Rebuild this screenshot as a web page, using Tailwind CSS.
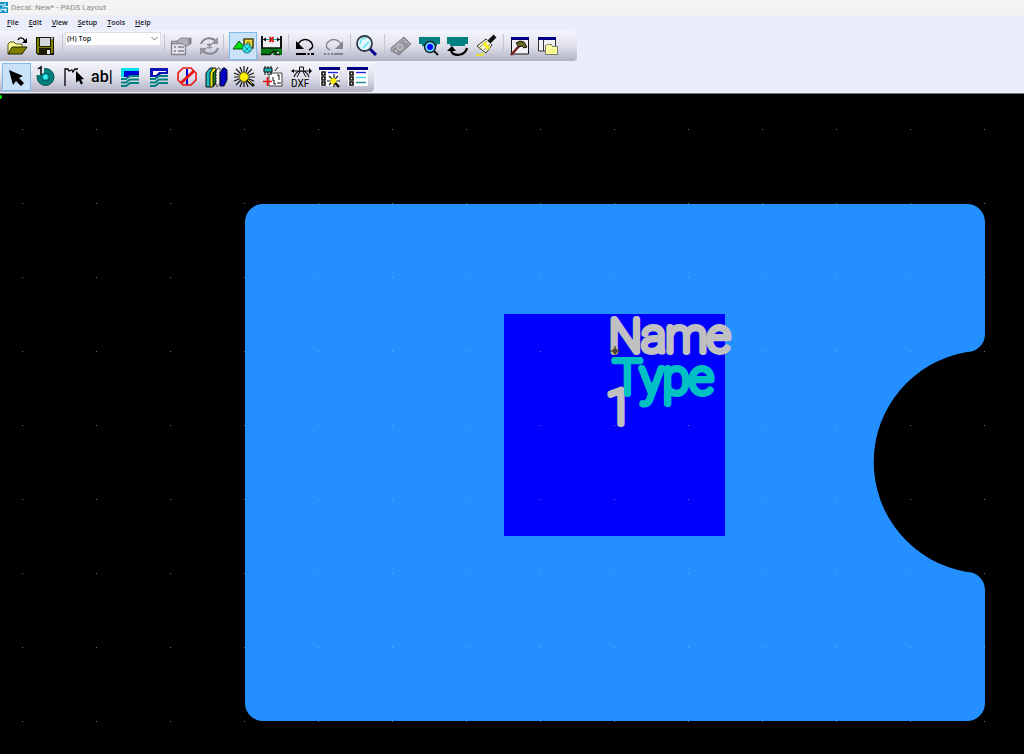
<!DOCTYPE html>
<html lang="en">
<head>
<meta charset="utf-8">
<title>Decal: New* - PADS Layout</title>
<script src="https://cdn.jsdelivr.net/npm/@tailwindcss/browser@4"></script>
</head>
<body class="flex h-screen flex-col overflow-hidden bg-[#ebedfb] font-['Open_Sans','Noto_Sans',sans-serif] text-black">

<header class="flex h-[15px] shrink-0 items-center gap-[3px] bg-[#f3f3f3] font-[Roboto,sans-serif] text-[8px] leading-3 text-[#8c8c8c]">
  <svg class="h-[11px] w-2 shrink-0" viewBox="0 0 8 12" preserveAspectRatio="none" aria-hidden="true"><path fill="#118fc4" d="M0 0h8v12H0z"/><path d="M0 3h3v3M5 1v4h3M1 11V8h4v3M6 7v3" fill="none" stroke="#d8f5ff" stroke-width="1.2"/></svg>
  <h1>Decal: New* - PADS Layout</h1>
</header>

<nav class="flex h-4 shrink-0 items-center gap-[10px] pl-[7px] text-[7px] leading-4 font-semibold text-[#15151c]" aria-label="Main menu">
  <button><u>F</u>ile</button>
  <button><u>E</u>dit</button>
  <button><u>V</u>iew</button>
  <button><u>S</u>etup</button>
  <button><u>T</u>ools</button>
  <button><u>H</u>elp</button>
</nav>

<div class="flex h-[30px] w-[577px] shrink-0 items-center rounded-r-sm bg-linear-to-b from-[#f5f6fc] via-[#dfe0ea] to-[#b2b2c6] pl-[3px]" role="toolbar" aria-label="Standard">
  <div class="flex w-14">
    <button class="flex-1" aria-label="Open"><svg class="size-7" viewBox="0 0 28 28"><path d="M5 22V12l2-2h4l2 2h6v3" fill="#ffff99" stroke="#55551a"/><path d="M5 22l4-7h15l-5 7z" fill="#808000" stroke="#222200"/><path d="M15 8c1-3 5-3 7 1" fill="none" stroke="#000" stroke-width="1.4"/><path d="M24 6v5h-5z"/></svg></button>
    <button class="flex-1" aria-label="Save"><svg class="size-7" viewBox="0 0 28 28"><path d="M5 5h18v18H7l-2-2z" fill="#1b1b08"/><path d="M6 6h2v15H6zM20 8h2v13h-2zM8 15h12v1H8z" fill="#808000"/><path d="M9 6h10v8H9z" fill="#d5d5de"/><path d="M16 18h3v4h-3z" fill="#e8e8ee"/><path d="M20 5.500h2v2h-2z" fill="#ddd"/></svg></button>
  </div>
  <span class="ml-[3px] h-6 w-px bg-[#c5c6d2]"></span>
  <div class="relative ml-[2px] flex h-7 w-24 items-start">
    <select aria-label="Layer" class="h-[14px] w-full appearance-none border border-[#dcdde6] bg-white py-0 pr-3 pl-px text-[7px] leading-3 font-semibold text-[#222]"><option>(H) Top</option></select>
    <svg class="pointer-events-none absolute top-[4px] right-[3px] h-[5px] w-[7px]" viewBox="0 0 7 5"><path d="M.5 1l3 3 3-3" fill="none" stroke="#777"/></svg>
  </div>
  <span class="ml-[3px] h-6 w-px bg-[#c5c6d2]"></span>
  <div class="ml-px flex w-[57px]">
    <button class="flex-1" aria-label="Properties"><svg class="size-7" viewBox="0 0 28 28" fill="none" stroke="#85858f"><path d="M5.500 9.500h14v13h-14z" fill="#e3e3ea" stroke-width="1.300"/><path d="M5 11.500h14M8 15h2M8 19h2M12 15h6M12 19h6" stroke-width="1.600"/><path d="M11 9l4-3h7l1 2v5l-4 1-3-3-3 1z" fill="#b2b2bb"/><path d="M23 6h2v6h-2" fill="#85858f"/></svg></button>
    <button class="flex-1" aria-label="Cycle"><svg class="size-7" viewBox="0 0 28 28" fill="none" stroke="#85858f" stroke-width="2"><path d="M6 12c2-6 10-8 15-3M23 16c-2 6-10 8-15 3"/><path d="M23 5v7h-7zM5 23v-7h7z" fill="#92929b" stroke="none"/><path d="M14.500 11v6M12 12l5 4M17 12l-5 4" stroke-width="1.200"/></svg></button>
  </div>
  <span class="h-6 w-px bg-[#c5c6d2]"></span>
  <div class="ml-[5px] flex w-14">
    <button class="flex-1 bg-[#c9e2f7] outline outline-[#80bbe9] -outline-offset-1" aria-label="Drafting toolbar" aria-pressed="true"><svg class="size-7" viewBox="0 0 28 28"><path d="M15 7h9v9h-9z" fill="#f2df3b" stroke="#4c4610" stroke-width="1.600"/><path d="M18 10h3v3h-3z" fill="#d8c52d" stroke="#8b8020"/><path d="M4 17l6-8 7 8z" fill="#00e000" stroke="#134d13"/><circle cx="18" cy="16.500" r="4.500" fill="#31e4ee" stroke="#177885"/><path d="M15 14l6 6M21 14l-6 6" stroke="#177885" stroke-width=".8"/></svg></button>
    <button class="flex-1" aria-label="Route design"><svg class="size-7" viewBox="0 0 28 28"><path d="M5 6h19v9H5z" fill="#f0f0f4"/><path d="M4 4h2v12H4zM23 4h2v12h-2z" fill="#111"/><path d="M6 7.500h17" stroke="#1f9c9c"/><path d="M6 7.500l3-2v4zM23 7.500l-3-2v4z"/><path d="M12.500 5l4 5M16.500 5l-4 5" stroke="#dd1010" stroke-width="2"/><path d="M4 16h21v7h-3v-3h-3v3h-3v-3l-3 3H4z" fill="#087a13"/><path d="M4 16h21M4 22.500h9l3-3h3v3h4" fill="none" stroke="#071d0b" stroke-width="1.500"/></svg></button>
  </div>
  <span class="ml-[3px] h-6 w-px bg-[#c5c6d2]"></span>
  <div class="ml-px flex w-[57px]">
    <button class="flex-1" aria-label="Undo"><svg class="size-7" viewBox="0 0 28 28"><path d="M8 12c3-5 9-6 13-2 3 4 2 6-2 8" fill="none" stroke="#000" stroke-width="1.500"/><path d="M6 9v8h8z"/><path d="M6 22h10M17.500 22h2M21 22h3" stroke="#000" stroke-width="2"/></svg></button>
    <button class="flex-1" aria-label="Redo"><svg class="size-7" viewBox="0 0 28 28"><path d="M22 12c-3-5-9-6-13-2-3 4-2 6 2 8" fill="none" stroke="#85858f" stroke-width="1.400"/><path d="M24 9v8h-8z" fill="#85858f"/><path d="M5 22h2M8.500 22h2M12 22h2M15 22h9" stroke="#85858f" stroke-width="2"/></svg></button>
  </div>
  <span class="ml-[3px] h-6 w-px bg-[#c5c6d2]"></span>
  <button class="ml-px" aria-label="Zoom"><svg class="size-7" viewBox="0 0 28 28"><path d="M18 17l6 6" stroke="#00008b" stroke-width="3"/><circle cx="12.500" cy="11.500" r="7.500" fill="#dff7fb" stroke="#303848" stroke-width="1.800"/><path d="M8 12c0-4 3-6 6-6M11 16l6-6" fill="none" stroke="#55e5ee" stroke-width="1.500"/></svg></button>
  <span class="ml-[4px] h-6 w-px bg-[#c5c6d2]"></span>
  <div class="ml-[2px] flex w-[114px]">
    <button class="flex-1" aria-label="Board"><svg class="size-7" viewBox="0 0 28 28" fill="#92929b" stroke="#85858f"><path d="M4 16L17 5l7 7-12 11-8-4z"/><path d="M4 18l13-11 6 6" fill="none" stroke="#b9b9c1"/><circle cx="13" cy="15" r="3" fill="#a2a2aa" stroke="#c9c9d0"/><path d="M17 9l2 2M8 18l2 2" stroke="#ddd"/></svg></button>
    <button class="flex-1" aria-label="View board"><svg class="size-7" viewBox="0 0 28 28"><path d="M3 5h21v7h-3v2H6v-2H3z" fill="#008080"/><path d="M18 19l4 4" stroke="#111" stroke-width="2"/><circle cx="14" cy="15" r="5.500" fill="#69dfef" stroke="#111a30" stroke-width="1.400"/><circle cx="14" cy="15" r="3" fill="#0000ff"/></svg></button>
    <button class="flex-1" aria-label="Refresh"><svg class="size-7" viewBox="0 0 28 28"><path d="M3 5h21v7h-3v2H6v-2H3z" fill="#008080"/><path d="M7 19c3 6 14 5 16-3" fill="none" stroke="#000" stroke-width="2.200"/><path d="M3 19l5-5 4 5z"/></svg></button>
    <button class="flex-1" aria-label="Clean up"><svg class="size-7" viewBox="0 0 28 28"><path d="M16 10l6-6" stroke="#111" stroke-width="4"/><path d="M4 14l9-7 6 6-6 8z" fill="#f6f6d1" stroke="#38382c"/><path d="M7 15l8-7M11 18l7-7" stroke="#888877"/><path d="M10 12l5 6 2-2-5-6z" fill="#fff20e"/><path d="M3 23h6l2-2" stroke="#eee600" fill="none" stroke-width="1.500"/></svg></button>
  </div>
  <span class="ml-[2px] h-6 w-px bg-[#c5c6d2]"></span>
  <div class="ml-px flex w-[57px]">
    <button class="flex-1" aria-label="Decal tools"><svg class="size-7" viewBox="0 0 28 28"><path d="M6.500 6h17v16h-17z" fill="#f2f2f6" stroke="#111"/><path d="M6 5h18v3H6z" fill="#000080"/><path d="M15 13L6 23" stroke="#782020" stroke-width="2.600"/><path d="M11 11l4-2 4 1 3 5-3 1-2-2-3 1z" fill="#66661a" stroke="#111"/></svg></button>
    <button class="flex-1" aria-label="Project explorer"><svg class="size-7" viewBox="0 0 28 28"><path d="M4.500 6h17v13h-17z" fill="#f2f2f6" stroke="#333"/><path d="M4 5h18v3H4z" fill="#000080"/><path d="M9.500 8v11" stroke="#333"/><path d="M11.500 22.500v-9l2-1h4l1 2h5v8z" fill="#ffffa6" stroke="#77776c"/><path d="M14 18h7M14 20h7" stroke="#e7d943" stroke-dasharray="1 1"/></svg></button>
  </div>
</div>

<div class="mt-px flex h-[30px] w-[374px] shrink-0 items-center rounded-r-sm bg-linear-to-b from-[#f5f6fc] via-[#dfe0ea] to-[#b2b2c6] pl-[2px]" role="toolbar" aria-label="Drafting">
  <div class="flex w-[371px]">
    <button class="flex-1 bg-[#c9e2f7] outline outline-[#80bbe9] -outline-offset-1" aria-label="Select" aria-pressed="true"><svg class="size-7" viewBox="0 0 28 28"><path d="M7 7l14 6-4 2 5 5-3 3-5-5-3 4z"/></svg></button>
    <button class="flex-1" aria-label="Terminal"><svg class="size-7" viewBox="0 0 28 28"><circle cx="14.500" cy="14" r="8.500" fill="#008080" stroke="#0c4c4c"/><path d="M4 3h9v9H4z" fill="#e6e7f0"/><circle cx="14.500" cy="14" r="4" fill="#00a8aa" stroke="#004e50"/><circle cx="14.500" cy="14" r="2.200" fill="#3ff0f3"/><path d="M7 6l3-2v8" fill="none" stroke="#000" stroke-width="1.500"/></svg></button>
    <button class="flex-1" aria-label="2D line"><svg class="size-7" viewBox="0 0 28 28"><path d="M6 23V6h3l1 2 3-1 1 2 2-3h3" fill="none" stroke="#000" stroke-width="1.300"/><path d="M17 8l8 8-3 .5 2 4-2 1-2-4-3 2z"/></svg></button>
    <button class="flex flex-1 items-center justify-center font-[Roboto,sans-serif] text-[16px] leading-4 font-medium" aria-label="Text">ab|</button>
    <button class="flex-1" aria-label="Copper"><svg class="size-7" viewBox="0 0 28 28"><path d="M5 5h18v6h-7l-3 3H5z" fill="#00dfee"/><path d="M8 8h15v4h-8l-3 2H8z" fill="#0000dc"/><path d="M5 16h5l4-3h9M5 19.500h5l4-3h9M5 23h5l4-3h9" fill="none" stroke="#008080" stroke-width="2"/></svg></button>
    <button class="flex-1" aria-label="Copper cutout"><svg class="size-7" viewBox="0 0 28 28"><path d="M5 5h18v6h-7l-3 3H5z" fill="#1010b8"/><path d="M8 8h13v1h-7l-3 3H8z" fill="#fff"/><path d="M5 16h5l4-3h9M5 19.500h5l4-3h9M5 23h5l4-3h9" fill="none" stroke="#008080" stroke-width="2"/></svg></button>
    <button class="flex-1" aria-label="Keepout"><svg class="size-7" viewBox="0 0 28 28"><path d="M14 6v16" stroke="#0000dd" stroke-width="2"/><path d="M10 5h8l5 5v7l-5 5h-8l-5-5v-7z" fill="none" stroke="#ee1414" stroke-width="1.600"/><path d="M8 20L21 8" stroke="#ee1414" stroke-width="3"/></svg></button>
    <button class="flex-1" aria-label="Library"><svg class="size-7" viewBox="0 0 28 28" stroke="#101010" stroke-linejoin="round"><path d="M4 10l4-5h3v14l-3 5H4z" fill="#19b9c4"/><path d="M8 10l3-5h3v15l-3 4H8z" fill="#e8ee10"/><path d="M11 10l3-3v12l-3 4z" fill="#168521"/><path d="M14 8l2-3h2v15l-2 3h-2z" fill="#eee" stroke-dasharray="2 1"/><path d="M18 10l3-5h2l2 2v10l-3 6h-4z" fill="#0000c8"/></svg></button>
    <button class="flex-1" aria-label="Wizard"><svg class="size-7" viewBox="0 0 28 28"><path d="M14 3v21M4 14h21M6 6l16 16M22 6L6 22M10 4l8 20M18 4l-8 20M4 10l20 8M24 10L4 18" stroke="#111" stroke-width="1.200"/><circle cx="14" cy="14" r="4.500" fill="#fff200" stroke="#867a22"/><path d="M17 17l7 6" stroke="#111" stroke-width="2.800"/><path d="M18 17l4 4" stroke="#eee000"/></svg></button>
    <button class="flex-1" aria-label="Import decal"><svg class="size-7" viewBox="0 0 28 28"><path d="M10 12l2-2h11v13H10z" fill="#fff" stroke="#444"/><path d="M5 5h8v4H5z" fill="#22b3b5" stroke="#111"/><path d="M6 3v2M9 3v2M12 3v2M6 9v3M9 9v3M12 9v3M16 8l3-4M14 14v4h2M18 12h2v5M14 20h2v2M18 20h4" fill="none" stroke="#111"/><path d="M4 18.500h9M8.500 14v9" stroke="#ee0808" stroke-width="1.600"/></svg></button>
    <button class="flex-1" aria-label="Import DXF"><svg class="size-7" viewBox="0 0 28 28"><path d="M5 8h19M13 8c-4 1-5 3-6 6M16 8c4 1 5 3 6 6" fill="none" stroke="#111" stroke-width="1.200"/><path d="M14 7l-4 7M15 7l4 7" stroke="#111"/><path d="M12.500 4h4v4h-4z" fill="#ddd" stroke="#111"/><path d="M4 8l3-2v4zM25 8l-3-3v6z"/><text x="4" y="24" font-family="Roboto, sans-serif" font-size="10" font-weight="400">DXF</text></svg></button>
    <button class="flex-1" aria-label="Options wizard"><svg class="size-7" viewBox="0 0 28 28"><path d="M4 5h19v18H4z" fill="#fff"/><path d="M3 4h21v3H3z" fill="#000080"/><path d="M6 9h3v3H6zM6 14h3v3H6zM6 19h3v3H6z" fill="#fff" stroke="#111" stroke-width="1.600"/><path d="M12 9.500h10" stroke="#2222e8" stroke-width="1.400"/><path d="M18 11v13M11 18h13M13 13l9 9M22 13l-9 9" stroke="#111" stroke-width="1.200"/><circle cx="17.500" cy="18" r="3" fill="#fff200"/><path d="M19 20l4 4" stroke="#111" stroke-width="2.400"/></svg></button>
    <button class="flex-1" aria-label="Options"><svg class="size-7" viewBox="0 0 28 28"><path d="M4 5h20v18H4z" fill="#fff"/><path d="M3 4h21v3H3z" fill="#000080"/><path d="M6 9h3v3H6zM6 14h3v3H6zM6 19h3v3H6z" fill="#fff" stroke="#111" stroke-width="1.600"/><path d="M12 9.500h10" stroke="#2222e8" stroke-width="1.400"/><path d="M12 14.500h10" stroke="#35dfee" stroke-width="1.400"/><path d="M12 19.500h10" stroke="#188d8d" stroke-width="1.400"/></svg></button>
  </div>
</div>

<main class="mt-px min-h-0 flex-1 border-t border-[#77777f] bg-black">
  <svg class="block size-full" role="img" aria-label="Decal editor canvas">
    <defs>
      <pattern id="grid" x="22" y="129" width="74" height="74" patternUnits="userSpaceOnUse"><path fill="#c4c8cc" fill-opacity=".55" d="M0 0h1v1H0z"/></pattern>
    </defs>
    <g transform="translate(0 -94)">
      <path fill="#2490ff" d="M263 204H967a18 18 0 0 1 18 18V334a18 18 0 0 1-18 18A111.500 111.500 0 0 0 967 572a18 18 0 0 1 18 18V703a18 18 0 0 1-18 18H263a18 18 0 0 1-18-18V222a18 18 0 0 1 18-18z"/>
      <path fill="#00f" d="M504 314h221v222H504z"/>
      <rect x="0" y="94" width="100%" height="100%" fill="url(#grid)"/>
      <circle cx="0" cy="97" r="2" fill="#00ff00"/>
      <g font-family="Roboto,sans-serif" font-weight="100" font-size="48" stroke-width="6" stroke-linejoin="round" stroke-linecap="round">
        <text x="606" y="424" fill="#c0c0c0" stroke="#c0c0c0">1</text>
        <text x="609" y="352" font-size="46" fill="#c0c0c0" stroke="#c0c0c0">Name</text>
        <text x="613" y="394" fill="#00c0c4" stroke="#00c0c4">Type</text>
      </g>
      <g fill="none" stroke="#252525"><circle cx="615" cy="351" r="3" stroke="#c8ad3c"/><circle cx="615" cy="351" r="2"/><path d="M610 351h10M615 346v10"/></g>
    </g>
  </svg>
</main>
</body>
</html>
